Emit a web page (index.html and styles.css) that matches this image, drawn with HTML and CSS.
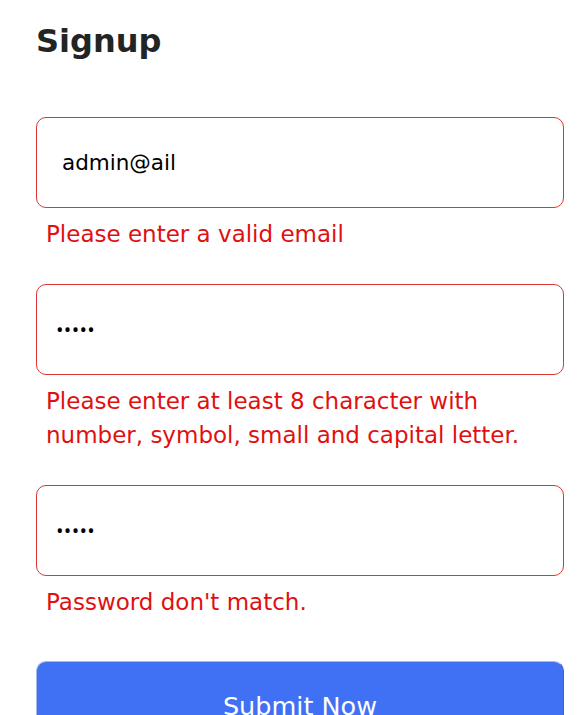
FILE: index.html
```html
<!DOCTYPE html>
<html lang="en">
<head>
<meta charset="utf-8">
<title>Signup</title>
<link rel="stylesheet" href="styles.css">
</head>
<body>
<main class="page">
  <h1 class="title">Signup</h1>
  <form class="form">
    <div class="field">
      <input class="input" type="email" value="admin@ail">
      <p class="error">Please enter a valid email</p>
    </div>
    <div class="field">
      <input class="input input-pass" type="password" value="12345">
      <p class="error">Please enter at least 8 character with number, symbol, small and capital letter.</p>
    </div>
    <div class="field">
      <input class="input input-pass" type="password" value="12345">
      <p class="error">Password don't match.</p>
    </div>
    <button class="submit" type="button">Submit Now</button>
  </form>
</main>
</body>
</html>
```

FILE: styles.css
```css
html, body {
  margin: 0;
  padding: 0;
  background: #ffffff;
}
body {
  font-family: "DejaVu Sans", "Open Sans", sans-serif;
  overflow: hidden;
  height: 715px;
}
.page {
  padding: 0 24px 0 36px;
}
.title {
  margin: 0;
  padding-top: 16px;
  font-size: 32px;
  line-height: 50px;
  font-weight: 700;
  color: #222525;
}
.form {
  margin-top: 51px;
  display: flex;
  flex-direction: column;
}
.field {
  margin-bottom: 33px;
}
.input {
  display: block;
  box-sizing: border-box;
  width: 100%;
  height: 91px;
  margin: 0;
  padding: 0 25px;
  border: 1px solid #dc3535;
  border-radius: 10px;
  font-family: inherit;
  font-size: 21.5px;
  color: #000;
  background: #fff;
  outline: none;
}
.input-pass {
  padding-left: 19px;
  font-family: "Open Sans", sans-serif;
  font-size: 20px;
  letter-spacing: 0.3px;
}
.error {
  margin: 0;
  padding: 9px 0 0 10px;
  font-size: 23px;
  line-height: 34px;
  color: #e01010;
}
.submit {
  display: block;
  margin-top: 9px;
  box-sizing: border-box;
  width: 100%;
  padding: 29px 0 30px;
  border: 1px solid #a9b9e4;
  border-right-color: #3562e0;
  border-radius: 10px;
  background: #4070f4;
  color: #fff;
  font-family: inherit;
  font-size: 25.5px;
  line-height: 30px;
  font-weight: 400;
}
```
